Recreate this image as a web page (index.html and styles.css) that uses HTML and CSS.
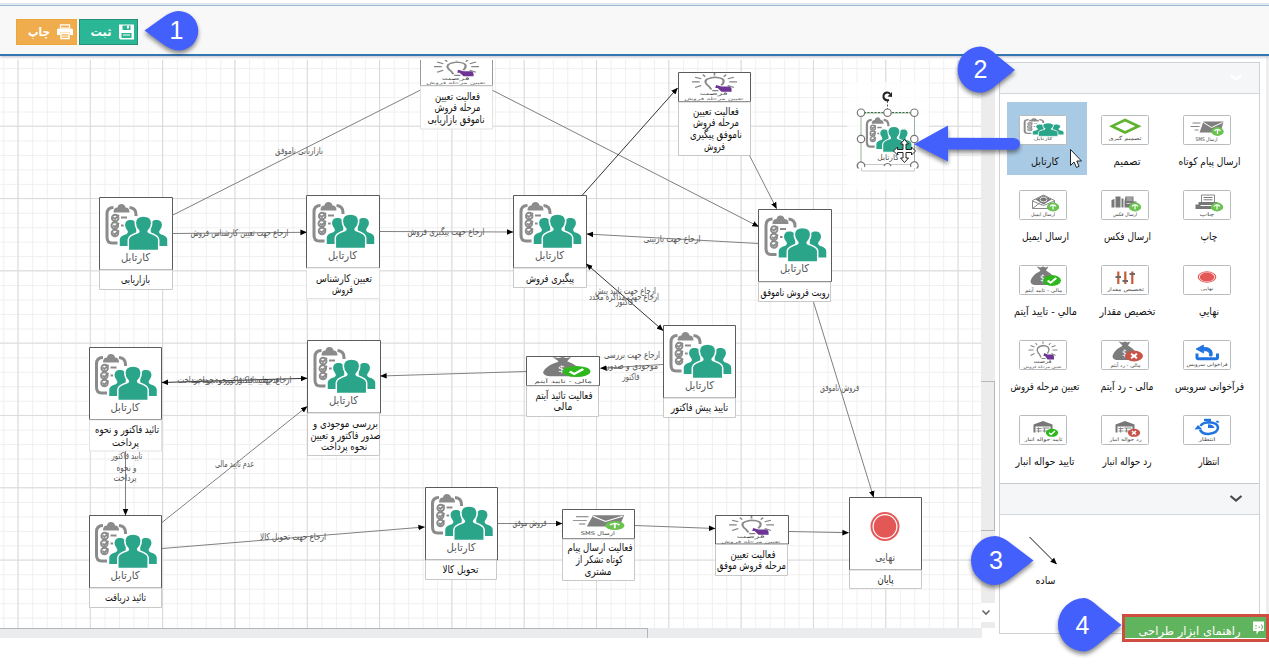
FILE: index.html
```html
<!DOCTYPE html>
<html lang="fa">
<head>
<meta charset="utf-8">
<title>طراحی فرآیند</title>
<link rel="stylesheet" href="styles.css">
</head>
<body>
<svg class="defs" width="0" height="0" aria-hidden="true">
  <defs>
    <pattern id="minor" x="17.8" y="53.7" width="14.46" height="14.46" patternUnits="userSpaceOnUse">
      <path d="M.5 0V14.5M0 .5H14.5" fill="none" stroke="#efefef"/>
    </pattern>
    <pattern id="major" x="17.4" y="53.3" width="72.32" height="72.32" patternUnits="userSpaceOnUse">
      <path d="M.5 0V72.4M0 .5H72.4" fill="none" stroke="#dadada"/>
    </pattern>
    <marker id="arrow" viewBox="0 0 8 8" refX="7" refY="4" markerWidth="7" markerHeight="7" markerUnits="userSpaceOnUse" orient="auto-start-reverse"><path d="M0 .8L7.5 4L0 7.2Z" fill="#000"/></marker>
    <symbol id="inbox" viewBox="0 0 73 73" preserveAspectRatio="none">
      <g fill="none" stroke="#8b8b8b" stroke-width="3">
        <path d="M18.500 46H13Q8 46 8 40V17Q8 10.500 14.500 10.500M30.500 10.500Q37 11 37 17.500V19"/>
        <g stroke-width="1.900"><circle cx="16.200" cy="21" r="3.300"/><circle cx="15.800" cy="28.500" r="3.300"/><circle cx="16" cy="36" r="3.300"/><path d="M14 20.500l2 1.500 4-4M14 28.500l2 1.500 4-4M14 36l2 1.500 4-4M22 20.500H28M22 28.500H25"/></g>
      </g>
      <path d="M14.500 15.500Q14.500 10.500 18.500 10.500Q19 7 22.400 7Q26 7 26.500 10.500Q30.500 10.500 30.500 15.500Z" fill="#8b8b8b"/>
      <g fill="#2ba58a" stroke="#fff" stroke-width="1.500">
        <path id="side" d="M20 49.700V42.500Q20 38.500 27 36.500Q29 35.500 27.500 33.500Q25 31 25.300 27.500Q26 22.300 31.500 22Q38 22.500 38 29V49.700Z"/>
        <use href="#side" transform="translate(89 0) scale(-1 1)"/>
        <path d="M29.300 53.500V42.500Q29.500 38.500 39 35.500Q40.500 34.500 39.500 33.500Q36.300 30.500 36.300 26Q36.500 19 44.500 19Q52.500 19 52.700 26Q52.700 30.500 49.500 33.500Q48.500 34.500 50 35.500Q59.500 38.500 59.700 42.500V53.500Z"/>
      </g>
      <text class="cap" x="36.500" y="63.500" textLength="29" lengthAdjust="spacingAndGlyphs">کارتابل</text>
    </symbol>
    <symbol id="final" viewBox="0 0 73 73" preserveAspectRatio="none">
      <circle cx="36.500" cy="29.500" r="13.500" fill="#fff" stroke="#e55b5b" stroke-width="2"/><circle cx="36.500" cy="29.500" r="11.300" fill="#e45757"/>
      <text class="cap" x="36.500" y="63.500" textLength="20" lengthAdjust="spacingAndGlyphs">نهایی</text>
    </symbol>
    <symbol id="sms" viewBox="0 0 47 28.500" preserveAspectRatio="none">
      <path d="M20 6H40L37 17H16Z" fill="#7f7f7f"/><path d="M20 7l8 5 11-5" fill="none" stroke="#fff" stroke-width="1"/>
      <path d="M9 7.500H17M7 11H16M11 14.500H15" stroke="#777" stroke-width=".9"/>
      <use href="#up" x="34" y="16"/>
      <text class="tiny" x="23" y="25.500" textLength="22" lengthAdjust="spacingAndGlyphs">ارسال SMS</text>
    </symbol>
    <g id="up"><ellipse rx="6.200" ry="4.400" fill="#6bc34f"/><path d="M0 2.500V-2M-3 -.500Q-2 -2 0-2.200Q2-2 3-.500" fill="none" stroke="#fff" stroke-width="1.200"/></g>
    <g id="ok"><ellipse rx="6.200" ry="4" fill="#2fb81d"/><path d="M-3 0L-1 1.700L3-1.800" fill="none" stroke="#fff" stroke-width="1.400"/></g>
    <g id="no"><ellipse rx="6.200" ry="4" fill="#c85548"/><path d="M-2-1.700L2 1.700M2-1.700L-2 1.700" fill="none" stroke="#fff" stroke-width="1.400"/></g>
    <symbol id="bulb" viewBox="0 0 47 28.500" preserveAspectRatio="none">
      <path d="M21.500 17Q20.500 14 18.500 12Q15.500 6.500 23.500 5Q31 5.500 29 11Q28.500 12 27.800 13" fill="none" stroke="#8a8a8a" stroke-width="1.400"/>
      <path d="M22 18H26M23.500 1V3.300M16 2.500l1.500 2M31 2.500l-1.500 2M11 5l4 1.600M36 5l-4 1.600M9 9.500H14M38 9.500H33M11 15l4-2M36 15l-4-2" fill="none" stroke="#858585" stroke-width="1.100"/>
      <path d="M24.500 12.500l3.500 1.500h5q1.500.500 1.500 2.500v2.500h-6.500l-2.500-3.500h-1.500z" fill="#6d3495"/>
      <text class="tiny" x="23" y="22.500" textLength="18" lengthAdjust="spacingAndGlyphs">فرصت</text>
      <text class="micro" x="23" y="27" textLength="38" lengthAdjust="spacingAndGlyphs">تعیین مرحله فروش</text>
    </symbol>
    <g id="bag"><path d="M17 1L21 2L23.500 1L26 2L29 1L26.500 5L28 6Q35 10 34.500 16Q34 19.500 30 19.500H15Q11 19 11 15.500Q13 9 20 6L21 5Z" fill="#7c7c7c"/><text class="dollar" x="23" y="15">$</text></g>
    <symbol id="money-ok" viewBox="0 0 47 28.500" preserveAspectRatio="none">
      <use href="#bag"/><use href="#ok" transform="translate(32.500 15) scale(1.450 1.350)"/>
      <text class="tiny" x="24" y="26" textLength="37" lengthAdjust="spacingAndGlyphs">مالی - تایید آیتم</text>
    </symbol>
    <symbol id="money-no" viewBox="0 0 47 28.500" preserveAspectRatio="none">
      <use href="#bag"/><use href="#no" transform="translate(32.500 15.500) scale(1.450 1.350)"/>
      <text class="tiny" x="24" y="26" textLength="30" lengthAdjust="spacingAndGlyphs">مالی - رد آیتم</text>
    </symbol>
    <symbol id="diamond" viewBox="0 0 47 28.500">
      <path d="M23.500 4.500L37 10.700L23.500 17L10.500 10.700Z" fill="none" stroke="#61b32f" stroke-width="2.600"/>
      <text class="tiny" x="23.500" y="24.500" textLength="33" lengthAdjust="spacingAndGlyphs">تصمیم گیری</text>
    </symbol>
    <symbol id="printer" viewBox="0 0 47 28.500">
      <path d="M18 4.500H31V12H18Z" fill="#fff" stroke="#888"/><path d="M20 7H29M20 9.300H29" stroke="#777"/><path d="M15 11.500H34V14H36V18.500H12V14H15Z" fill="#777"/><path d="M17 15H30" stroke="#fff"/><use href="#up" x="33.500" y="16.500"/>
      <text class="tiny" x="23.500" y="25.500" textLength="15" lengthAdjust="spacingAndGlyphs">چاپ</text>
    </symbol>
    <symbol id="fax" viewBox="0 0 47 28.500">
      <path d="M10 9.500l3-1V17H10ZM14 6H19V17H14ZM20 8H22V17H20ZM24 6H32V11H35V17H23V11Z" fill="#777"/><path d="M25 7.500H31M25 9.500H31M25 13H29" stroke="#ccc"/><use href="#up" x="33.500" y="16.500"/>
      <text class="tiny" x="23.500" y="25.500" textLength="24" lengthAdjust="spacingAndGlyphs">ارسال فکس</text>
    </symbol>
    <symbol id="email" viewBox="0 0 47 28.500">
      <path d="M13 10L24 4.500L35 10V18H13Z" fill="#fff" stroke="#888"/><path d="M16 9L24 5L32 9L24 14Z" fill="#777"/><ellipse cx="24" cy="9" rx="3.500" ry="2.300" fill="none" stroke="#ddd"/><path d="M13 18L21 12M13 10.500L24 15L35 10.500" fill="none" stroke="#888"/><use href="#up" x="33.500" y="16.500"/>
      <text class="tiny" x="23.500" y="25.500" textLength="24" lengthAdjust="spacingAndGlyphs">ارسال ایمیل</text>
    </symbol>
    <symbol id="sliders" viewBox="0 0 47 28.500">
      <path d="M16.800 6V18.500M23.800 6V18.500M30.800 6V18.500" stroke="#c65a37" stroke-width="2.200"/><path d="M14 11.500H19.500M21 15.500H26.500M28 8.500H33.500" stroke="#6a6a6a" stroke-width="2"/>
      <text class="tiny" x="24" y="25.500" textLength="37" lengthAdjust="spacingAndGlyphs">تخصیص مقدار</text>
    </symbol>
    <symbol id="service" viewBox="0 0 47 28.500">
      <path d="M13.500 13V17Q13.500 18.300 15 18.300H32.500Q34 18.300 34 17V13" fill="none" stroke="#1f74e0" stroke-width="3"/><path d="M20 4.500L12.500 8.500L20 12.500V10.200Q27 10 26 15.500H28.500Q30.500 7 20 6.800Z" fill="#1f74e0" stroke="#1f74e0" stroke-width=".8"/>
      <text class="tiny" x="23.500" y="25.500" textLength="41" lengthAdjust="spacingAndGlyphs">فراخوانی سرویس</text>
    </symbol>
    <symbol id="timer" viewBox="0 0 47 28.500">
      <path d="M16.500 14Q18 18.500 25 18.500Q34.500 17.500 34.500 12Q34 7.500 26 6.800Q19 7 17 10.500" fill="none" stroke="#1f74e0" stroke-width="2.500"/><path d="M11 14L14.500 9.500L18.500 13.500ZM20.500 3.300H27.500V5.500H20.500ZM32 6l2-1 2 1.500-2 1Z" fill="#1f74e0"/><path d="M24.500 12.500V8.800Q30 9 31 12.500Z" fill="#1f74e0"/>
      <text class="tiny" x="23.500" y="25.500" textLength="17" lengthAdjust="spacingAndGlyphs">انتظار</text>
    </symbol>
    <g id="depot"><path d="M14 9L23.500 5.500L33 9V17H31V11H16V17H14Z" fill="#777"/><path d="M17 13H22M17 15.500H22M23 12.500H30M23 15.500H29M19 12V17M25 12V17" stroke="#888" stroke-width="1.200"/></g>
    <symbol id="depot-ok" viewBox="0 0 47 28.500"><use href="#depot"/><use href="#ok" x="32.500" y="17.300"/><text class="tiny" x="24" y="25.500" textLength="38" lengthAdjust="spacingAndGlyphs">تایید حواله انبار</text></symbol>
    <symbol id="depot-no" viewBox="0 0 47 28.500"><use href="#depot"/><use href="#no" x="32.500" y="17.300"/><text class="tiny" x="24" y="25.500" textLength="32" lengthAdjust="spacingAndGlyphs">رد حواله انبار</text></symbol>
  </defs>
</svg>

<header class="toolbar">
  <button class="btn print">
    <svg width="22" height="16" viewBox="0 0 22 16"><text x="11" y="12" textLength="22" lengthAdjust="spacingAndGlyphs">چاپ</text></svg>
    <svg width="16" height="16" viewBox="0 0 16 16"><path d="M3.500.800H12.500V4H3.500Z" fill="none" stroke="#fff" stroke-width="1.200"/><path d="M0 6Q0 4.500 1.500 4.500H14.500Q16 4.500 16 6V11H13V8.500H3V11H0Z" fill="#fff"/><path d="M4 9.500H12V14.500H4Z" fill="none" stroke="#fff" stroke-width="1.500"/><path d="M5 12H11" stroke="#fff"/></svg>
  </button>
  <button class="btn save">
    <svg width="22" height="16" viewBox="0 0 22 16"><text x="11" y="12" textLength="21" lengthAdjust="spacingAndGlyphs">ثبت</text></svg>
    <svg width="15" height="16" viewBox="0 0 15 16"><path d="M0 .500H15V15.500H1.500L0 14Z" fill="#fff"/><path d="M3.500 1.500H11.500V6H3.500ZM2.500 9H12.500V14H2.500Z" fill="#2bb795"/><path d="M8 1.500H10V4.500H8ZM4 10.500H11V11.500H4Z" fill="#fff"/></svg>
  </button>
</header>

<main class="main">
  <section class="workspace">
    <div class="upper">
      <svg class="canvas" width="981" height="572" viewBox="0 56 981 572">
        <rect y="60" width="981" height="568" fill="url(#minor)"/>
        <rect y="60" width="981" height="568" fill="url(#major)"/>
        <rect x="847" y="82" width="82" height="108" fill="#fff" opacity=".75"/>
        <g class="node">
          <path class="frame" d="M99.500 197.500H172.500V270H99.500Z"/><path class="box" d="M99.500 270H172.500V289.500H99.500Z"/><use href="#inbox" x="99" y="197" width="73" height="73"/>
          <path class="frame" d="M306.500 195.500H379.500V268H306.500Z"/><path class="box open" d="M306.500 268H379.500V298.500H306.500Z"/><use href="#inbox" x="306" y="195" width="73" height="73"/>
          <path class="frame" d="M513.500 195.500H586.500V268H513.500Z"/><path class="box" d="M513.500 268H586.500V287.500H513.500Z"/><use href="#inbox" x="513" y="195" width="73" height="73"/>
          <path class="frame" d="M758.500 209.500H831.500V281.500H758.500Z"/><path class="box" d="M758.500 282H830.500V301.500H758.500Z"/><use href="#inbox" x="758" y="208.500" width="73" height="73"/>
          <path class="frame soft" d="M420.500 60V85.500H492.500V60"/><path class="box open" d="M420.500 86H492.500V129H420.500Z"/>
          <svg x="420" y="60" width="73" height="26" viewBox="0 3 73 26"><use href="#bulb" width="73" height="29"/></svg>
          <path class="frame" d="M678.500 72.500H750.500V101.500H678.500Z"/><path class="box" d="M678.500 102H750.500V155.500H678.500Z"/><use href="#bulb" x="678" y="72" width="73" height="29.500"/>
          <path class="frame" d="M663.500 325.500H735.500V398H663.500Z"/><path class="box" d="M663.500 398H735.500V417.500H663.500Z"/><use href="#inbox" x="663" y="325" width="73" height="73"/>
          <path class="frame" d="M526.500 356.500H599.500V385.500H526.500Z"/><path class="box" d="M526.500 386H598.500V416.500H526.500Z"/><use href="#money-ok" x="526" y="356" width="73" height="29.500"/>
          <path class="frame" d="M89.500 347.500H161.500V419.500H89.500Z"/><path class="box open" d="M89.500 420H161.500V451H89.500Z"/><use href="#inbox" x="88.500" y="347" width="73" height="73"/>
          <path class="frame" d="M307.500 340.500H380.500V413H307.500Z"/><path class="box" d="M307.500 413H379.500V455.500H307.500Z"/><use href="#inbox" x="307" y="340" width="73" height="73"/>
          <path class="frame" d="M89.500 515.500H161.500V588H89.500Z"/><path class="box" d="M89.500 588H161.500V607.500H89.500Z"/><use href="#inbox" x="88.500" y="515" width="73" height="73"/>
          <path class="frame" d="M425.500 487.500H497.500V560H425.500Z"/><path class="box" d="M425.500 560H496.500V579.500H425.500Z"/><use href="#inbox" x="424.500" y="487" width="73" height="73"/>
          <path class="frame" d="M562.500 509.500H634.500V538.500H562.500Z"/><path class="box" d="M562.500 539H634.500V580.500H562.500Z"/><use href="#sms" x="562" y="509" width="73" height="29.500"/>
          <path class="frame" d="M715.500 515.500H788.500V544H715.500Z"/><path class="box" d="M715.500 544.500H787.500V575.500H715.500Z"/><use href="#bulb" x="715" y="515" width="73" height="29.500"/>
          <path class="frame" d="M849.500 497.500H921.500V570H849.500Z"/><path class="box" d="M849.500 570H921.500V588.500H849.500Z"/><use href="#final" x="848.500" y="497" width="73" height="73"/>
        </g>
        <g class="edges">
          <path d="M172 215.500L420 90.300"/>
          <path d="M492.500 90.300L758.500 226.500" marker-end="url(#arrow)"/>
          <path d="M172.500 233.500L306.500 232.300" marker-end="url(#arrow)"/>
          <path d="M379.500 231.500L513 232" marker-end="url(#arrow)"/>
          <path class="dark" d="M582 195.500L677.500 88" marker-end="url(#arrow)"/>
          <path d="M749.500 155.500L776.500 208.500" marker-end="url(#arrow)"/>
          <path d="M758.500 243.500L587 234" marker-end="url(#arrow)"/>
          <path class="dark" d="M586.500 264L663 330.500" marker-start="url(#arrow)" marker-end="url(#arrow)"/>
          <path d="M663 364.500L600.500 368.300" marker-end="url(#arrow)"/>
          <path d="M526 371.500L380.500 376" marker-end="url(#arrow)"/>
          <path class="dark" d="M162 382.500L307 378.300" marker-start="url(#arrow)" marker-end="url(#arrow)"/>
          <path d="M125.500 451V515" marker-end="url(#arrow)"/>
          <path d="M162 522.500L307 406.500" marker-end="url(#arrow)"/>
          <path d="M162 548.500L424.500 527" marker-end="url(#arrow)"/>
          <path d="M498 523.500H562" marker-end="url(#arrow)"/>
          <path d="M635 525.500L715 528.500" marker-end="url(#arrow)"/>
          <path d="M788.500 531.500L848.500 532.700" marker-end="url(#arrow)"/>
          <path d="M813.500 302L873.500 497" marker-end="url(#arrow)"/>
        </g>
        <g class="edge-text">
          <text x="299" y="154" textLength="48" lengthAdjust="spacingAndGlyphs">بازاریابی ناموفق</text>
          <text x="239.500" y="236" textLength="98" lengthAdjust="spacingAndGlyphs">ارجاع جهت تعیین کارشناس فروش</text>
          <text x="446" y="235" textLength="77" lengthAdjust="spacingAndGlyphs">ارجاع جهت پیگیری فروش</text>
          <text x="672" y="242" textLength="57" lengthAdjust="spacingAndGlyphs">ارجاع جهت بازبینی</text>
          <text x="625.500" y="293.500" textLength="61" lengthAdjust="spacingAndGlyphs">ارجاع جهت تایید پیش</text>
          <text x="624" y="299.500" textLength="70" lengthAdjust="spacingAndGlyphs">ارجاع جهت مذاکره مجدد</text>
          <text x="624.500" y="304.500" textLength="17" lengthAdjust="spacingAndGlyphs">فاکتور</text>
          <text x="632" y="358" textLength="56" lengthAdjust="spacingAndGlyphs">ارجاع جهت بررسی</text>
          <text x="632" y="369" textLength="52" lengthAdjust="spacingAndGlyphs">موجودی و صدور</text>
          <text x="631" y="380" textLength="17" lengthAdjust="spacingAndGlyphs">فاکتور</text>
          <text x="234.500" y="382.500" textLength="114" lengthAdjust="spacingAndGlyphs">ارجاع جهت تایید فاکتور و نحوه پرداخت</text>
          <text x="236" y="382.500" textLength="88" lengthAdjust="spacingAndGlyphs">عدم تایید فاکتور و نحوه پرداخت</text>
          <text x="127" y="458.500" textLength="31" lengthAdjust="spacingAndGlyphs">تایید فاکتور</text>
          <text x="126.500" y="470.500" textLength="20" lengthAdjust="spacingAndGlyphs">و نحوه</text>
          <text x="125" y="481" textLength="23" lengthAdjust="spacingAndGlyphs">پرداخت</text>
          <text x="234.500" y="467" textLength="39" lengthAdjust="spacingAndGlyphs">عدم تایید مالی</text>
          <text x="293" y="540" textLength="66" lengthAdjust="spacingAndGlyphs">ارجاع جهت تحویل کالا</text>
          <text x="529.500" y="526" textLength="34" lengthAdjust="spacingAndGlyphs">فروش موفق</text>
          <text x="839.500" y="391" textLength="39" lengthAdjust="spacingAndGlyphs">فروش ناموفق</text>
        </g>
        <g class="node-text">
          <text x="135.500" y="283" textLength="29" lengthAdjust="spacingAndGlyphs">بازاریابی</text>
          <text x="344" y="282" textLength="56" lengthAdjust="spacingAndGlyphs">تعیین کارشناس</text>
          <text x="342.500" y="293" textLength="21" lengthAdjust="spacingAndGlyphs">فروش</text>
          <text x="550" y="282" textLength="48" lengthAdjust="spacingAndGlyphs">پیگیری فروش</text>
          <text x="795" y="296" textLength="69" lengthAdjust="spacingAndGlyphs">رویت فروش ناموفق</text>
          <text x="457.500" y="99.500" textLength="45" lengthAdjust="spacingAndGlyphs">فعالیت تعیین</text>
          <text x="457.500" y="111" textLength="46" lengthAdjust="spacingAndGlyphs">مرحله فروش</text>
          <text x="456" y="123" textLength="57" lengthAdjust="spacingAndGlyphs">ناموفق بازاریابی</text>
          <text x="716" y="114.500" textLength="46" lengthAdjust="spacingAndGlyphs">فعالیت تعیین</text>
          <text x="716" y="126" textLength="46" lengthAdjust="spacingAndGlyphs">مرحله فروش</text>
          <text x="716" y="138" textLength="52" lengthAdjust="spacingAndGlyphs">ناموفق پیگیری</text>
          <text x="714.500" y="149.500" textLength="21" lengthAdjust="spacingAndGlyphs">فروش</text>
          <text x="699.500" y="411" textLength="57" lengthAdjust="spacingAndGlyphs">تایید پیش فاکتور</text>
          <text x="564" y="399" textLength="57" lengthAdjust="spacingAndGlyphs">فعالیت تائید آیتم</text>
          <text x="563" y="410" textLength="19" lengthAdjust="spacingAndGlyphs">مالی</text>
          <text x="127" y="433" textLength="64" lengthAdjust="spacingAndGlyphs">تائید فاکتور و نحوه</text>
          <text x="125.500" y="445.500" textLength="27" lengthAdjust="spacingAndGlyphs">پرداخت</text>
          <text x="345.500" y="426.500" textLength="65" lengthAdjust="spacingAndGlyphs">بررسی موجودی و</text>
          <text x="345.500" y="438.500" textLength="70" lengthAdjust="spacingAndGlyphs">صدور فاکتور و تعیین</text>
          <text x="344" y="450" textLength="46" lengthAdjust="spacingAndGlyphs">نحوه پرداخت</text>
          <text x="125.500" y="601" textLength="41" lengthAdjust="spacingAndGlyphs">تائید دریافت</text>
          <text x="460.500" y="573" textLength="36" lengthAdjust="spacingAndGlyphs">تحویل کالا</text>
          <text x="600" y="551" textLength="65" lengthAdjust="spacingAndGlyphs">فعالیت ارسال پیام</text>
          <text x="599.500" y="563" textLength="47" lengthAdjust="spacingAndGlyphs">کوتاه تشکر از</text>
          <text x="598" y="575" textLength="27" lengthAdjust="spacingAndGlyphs">مشتری</text>
          <text x="753" y="558" textLength="45" lengthAdjust="spacingAndGlyphs">فعالیت تعیین</text>
          <text x="751.500" y="569" textLength="69" lengthAdjust="spacingAndGlyphs">مرحله فروش موفق</text>
          <text x="885.500" y="583" textLength="16" lengthAdjust="spacingAndGlyphs">پایان</text>
        </g>
        <g class="dragged">
          <rect x="861" y="113" width="53.500" height="53" fill="#fff" stroke="#8fb59a"/>
          <path class="box" d="M861.500 164.500H914.500V171H861.500Z"/>
          <use href="#inbox" x="861" y="112" width="54" height="55"/>
          <path d="M860.500 112.500H914.500M887.500 101V112" fill="none" stroke="#3f6b48" stroke-dasharray="2 1.500"/>
          <g class="handles"><circle cx="861" cy="112.700" r="3.700"/><circle cx="887.500" cy="112.700" r="3.700"/><circle cx="914.300" cy="112.700" r="3.700"/><circle cx="861" cy="139" r="3.700"/><circle cx="914.300" cy="139" r="3.700"/><path d="M858.500 168.500A3.700 3.700 0 1 1 864.500 167M884 166A3.700 3.700 0 0 1 891 166M911 167A3.700 3.700 0 1 1 916.500 168.500"/></g>
          <path d="M889 100Q885 101 883.500 97.500Q883 93 887 92.500Q889 92.300 890 94" fill="none" stroke="#222" stroke-width="2"/><path d="M887.500 96.500L892 92V97Z" fill="#222"/>
        </g>
      </svg>
      <div class="vbar">
        <div class="thumb"></div>
        <svg class="down" width="14" height="19" viewBox="0 0 14 19"><path d="M1.500 7.500l3.500 3.500 3.500-3.500" fill="none" stroke="#666" stroke-width="1.600"/></svg>
      </div>
    </div>
    <div class="hbar"><div class="thumb"></div></div>
  </section>

  <aside class="palette">
    <div class="head"><svg width="14" height="8" viewBox="0 0 14 8"><path d="M1.500 1L7 5.500L12.500 1" fill="none" stroke="#fff" stroke-width="2.500"/></svg></div>
    <div class="tiles">
      <svg class="tile" viewBox="0 0 80 73"><rect class="card" x="12.500" y="13.500" width="47" height="29" rx="1"/><use href="#sms" x="12.500" y="13.500" width="47" height="28.500"/><text x="38.500" y="62.500" textLength="62" lengthAdjust="spacingAndGlyphs">ارسال پیام کوتاه</text></svg>
      <svg class="tile" viewBox="0 0 80 73"><rect class="card" x="12.500" y="13.500" width="47" height="29" rx="1"/><use href="#diamond" x="12.500" y="13.500" width="47" height="28.500"/><text x="38" y="62.500" textLength="27" lengthAdjust="spacingAndGlyphs">تصمیم</text></svg>
      <svg class="tile selected" viewBox="0 0 80 73"><rect class="card" x="12.500" y="13.500" width="47" height="29" rx="1"/><use href="#inbox" x="12.500" y="13.500" width="47" height="28.500"/><text x="38" y="62.500" textLength="28" lengthAdjust="spacingAndGlyphs">کارتابل</text></svg>

      <svg class="tile" viewBox="0 0 80 73"><rect class="card" x="12.500" y="13.500" width="47" height="29" rx="1"/><use href="#printer" x="12.500" y="13.500" width="47" height="28.500"/><text x="38" y="62.500" textLength="17" lengthAdjust="spacingAndGlyphs">چاپ</text></svg>
      <svg class="tile" viewBox="0 0 80 73"><rect class="card" x="12.500" y="13.500" width="47" height="29" rx="1"/><use href="#fax" x="12.500" y="13.500" width="47" height="28.500"/><text x="38.500" y="62.500" textLength="47" lengthAdjust="spacingAndGlyphs">ارسال فکس</text></svg>
      <svg class="tile" viewBox="0 0 80 73"><rect class="card" x="12.500" y="13.500" width="47" height="29" rx="1"/><use href="#email" x="12.500" y="13.500" width="47" height="28.500"/><text x="38.500" y="62.500" textLength="47" lengthAdjust="spacingAndGlyphs">ارسال ایمیل</text></svg>

      <svg class="tile" viewBox="0 0 80 73"><rect class="card" x="12.500" y="13.500" width="47" height="29" rx="1"/><use href="#final" x="12.500" y="13.500" width="47" height="28.500"/><text x="38" y="62.500" textLength="20" lengthAdjust="spacingAndGlyphs">نهايي</text></svg>
      <svg class="tile" viewBox="0 0 80 73"><rect class="card" x="12.500" y="13.500" width="47" height="29" rx="1"/><use href="#sliders" x="12.500" y="13.500" width="47" height="28.500"/><text x="38.500" y="62.500" textLength="56" lengthAdjust="spacingAndGlyphs">تخصیص مقدار</text></svg>
      <svg class="tile" viewBox="0 0 80 73"><rect class="card" x="12.500" y="13.500" width="47" height="29" rx="1"/><use href="#money-ok" x="12.500" y="13.500" width="47" height="28.500"/><text x="38.500" y="62.500" textLength="63" lengthAdjust="spacingAndGlyphs">مالي - تاييد آيتم</text></svg>

      <svg class="tile" viewBox="0 0 80 73"><rect class="card" x="12.500" y="13.500" width="47" height="29" rx="1"/><use href="#service" x="12.500" y="13.500" width="47" height="28.500"/><text x="38.500" y="62.500" textLength="69" lengthAdjust="spacingAndGlyphs">فرآخوانی سرویس</text></svg>
      <svg class="tile" viewBox="0 0 80 73"><rect class="card" x="12.500" y="13.500" width="47" height="29" rx="1"/><use href="#money-no" x="12.500" y="13.500" width="47" height="28.500"/><text x="38" y="62.500" textLength="53" lengthAdjust="spacingAndGlyphs">مالی - رد آیتم</text></svg>
      <svg class="tile" viewBox="0 0 80 73"><rect class="card" x="12.500" y="13.500" width="47" height="29" rx="1"/><use href="#bulb" x="12.500" y="13.500" width="47" height="28.500"/><text x="38" y="62.500" textLength="69" lengthAdjust="spacingAndGlyphs">تعیین مرحله فروش</text></svg>

      <svg class="tile" viewBox="0 0 80 73"><rect class="card" x="12.500" y="13.500" width="47" height="29" rx="1"/><use href="#timer" x="12.500" y="13.500" width="47" height="28.500"/><text x="38" y="62.500" textLength="21" lengthAdjust="spacingAndGlyphs">انتظار</text></svg>
      <svg class="tile" viewBox="0 0 80 73"><rect class="card" x="12.500" y="13.500" width="47" height="29" rx="1"/><use href="#depot-no" x="12.500" y="13.500" width="47" height="28.500"/><text x="38" y="62.500" textLength="49" lengthAdjust="spacingAndGlyphs">رد حواله انبار</text></svg>
      <svg class="tile" viewBox="0 0 80 73"><rect class="card" x="12.500" y="13.500" width="47" height="29" rx="1"/><use href="#depot-ok" x="12.500" y="13.500" width="47" height="28.500"/><text x="38" y="62.500" textLength="59" lengthAdjust="spacingAndGlyphs">تایید حواله انبار</text></svg>
    </div>
    <div class="head second"><svg width="14" height="8" viewBox="0 0 14 8"><path d="M1.500 1L7 5.500L12.500 1" fill="none" stroke="#4a4a4a" stroke-width="2.200"/></svg></div>
    <div class="links">
      <svg class="tile" viewBox="0 0 80 73"><path d="M21.500 15L48.500 42" fill="none" stroke="#111" marker-end="url(#arrow)"/><text x="37.500" y="62" textLength="20" lengthAdjust="spacingAndGlyphs">ساده</text></svg>
    </div>
  </aside>
  <div class="edge"></div>
</main>

<div class="help">
  <svg width="126" height="22" viewBox="0 0 126 22"><text x="51.500" y="17.500" textLength="102" lengthAdjust="spacingAndGlyphs">راهنمای ابزار طراحی</text><path d="M115 4.500H126V14H121L118.500 17.500V14H115Z" fill="#fff"/><path d="M118 8V9.500M118 11V12M120.500 10.200H122M123.500 7.500Q125.500 10 123.500 12.500" fill="none" stroke="#5fa95f"/></svg>
</div>

<svg class="overlay" width="1269" height="664" viewBox="0 0 1269 664">
  <g class="marks">
    <path d="M144.500 30.500L163.500 17Q171 11.300 178.500 11A19.750 19.750 0 0 1 178.500 50.500Q171 50 163.500 44.500Z"/>
    <path d="M1015 70L997 55.500Q989 46.800 980.700 46.500A23.100 23.100 0 0 0 980.700 92.700Q989 92 997 84.500Z"/>
    <path d="M1033.500 560.500L1013 545Q1003 536.500 995.500 536A24.500 24.500 0 0 0 995.500 585Q1003 584.500 1013 576.500Z"/>
    <path d="M1121.500 625L1099 607Q1090 598.500 1084.700 598A26.750 26.750 0 0 0 1084.700 651.500Q1092 650 1099 643.500Z"/>
    <path d="M914 144.300L948 125.500V137.700L1014 138Q1020 139 1020 144Q1020 149 1014 149.700L948 149.500V161.500Z"/>
  </g>
  <g class="digits"><text x="176.500" y="38.500">1</text><text x="980.500" y="78">2</text><text x="996" y="568.500">3</text><text x="1082.500" y="634">4</text></g>
  <path d="M904.500 139.500L908.500 144H906V149.500H911.500V147L915.500 151L911.500 155V152.500H906V158H908.500L904.500 162.500L900.500 158H903V152.500H897.500V155L893.500 151L897.500 147V149.500H903V144H900.500Z" fill="#fff" stroke="#222"/>
  <path d="M1070.500 149.500V165.500L1074 162L1076.500 167.500L1079 166.300L1076.800 161H1081.500Z" fill="#fff" stroke="#222"/>
</svg>
</body>
</html>
```
FILE: styles.css
```css
* { box-sizing: border-box; }
body { margin: 0; width: 1269px; height: 664px; overflow: hidden; background: #fff; font-family: "DejaVu Sans", Tahoma, sans-serif; position: relative; }
svg { display: block; }
.defs { position: absolute; }
text { direction: rtl; text-anchor: middle; font-family: "DejaVu Sans", sans-serif; }

.toolbar { height: 56px; padding: 13px 0 0 16px; display: flex; gap: 2px; align-items: flex-start; background: #f8f8f8; border-bottom: 2px solid #3576b0; border-top: 6px solid #a9c2dc; border-image: linear-gradient(#fff 0 3px, #dfe8f1 3px 5px, #9fbad6 5px 6px, #3576b0 6px) 6 0 2 0; box-shadow: 0 1px 3px #bbc; position: relative; }
.btn { height: 26px; display: flex; align-items: center; justify-content: flex-end; gap: 7px; padding: 0 3px 0 0; margin: 0; }
.btn text { font-size: 12px; font-weight: bold; fill: #fff; }
.btn svg { overflow: visible; }
.print { width: 61px; background: #f0ad4e; border: 1px solid #eda63c; }
.save { width: 59px; background: #2bb795; border: 1px solid #248f77; }

.main { display: flex; height: 582px; }
.workspace { width: 995px; }
.upper { display: flex; height: 572px; }
.vbar { width: 14px; display: flex; flex-direction: column; justify-content: space-between; padding-top: 4px; background: #ececed; }
.vbar .thumb { margin-top: 321px; height: 150px; border: 1px solid #b5b7b9; border-left: 0; }
.vbar .down { background: #fff; margin-bottom: 6px; }
.hbar { width: 982px; height: 10px; background: #ebecee; }
.hbar .thumb { width: 648px; height: 10px; border-top: 1px solid #b3b6b9; border-right: 1px solid #b3b6b9; }

.edges path { stroke: #808080; stroke-width: 1; fill: none; }
.edges .dark { stroke: #333; }
.frame { fill: #fff; stroke: #5c5c5c; }
.frame.soft { stroke: #999; }
.box { fill: #fff; stroke: #c9c9c9; }
.box.open { stroke: #e2e2e2; }
.node-text text { font-size: 10.5px; fill: #111; }
.edge-text text { font-size: 9.5px; fill: #555; }
.cap { font-size: 11px; fill: #555; }
.tiny { font-size: 5px; fill: #444; }
.micro { font-size: 4px; fill: #666; }
.dollar { font-size: 8px; fill: #fff; }
.handles { fill: #fff; stroke: #777; stroke-width: 1.2; }

.palette { width: 261px; height: 572px; margin: 6px 0 0 4px; border: 1px solid #cfd2d4; background: #fff; }
.head { height: 31px; background: #f5f6f7; border-bottom: 1px solid #d3d6d8; display: flex; justify-content: flex-end; align-items: center; padding-right: 16px; }
.head.second { border-top: 1px solid #c6cacd; height: 32px; }
.tiles { height: 389px; padding: 8px 0 0 7px; display: grid; grid-template-columns: repeat(3, 80px); grid-auto-rows: 73px; column-gap: 2px; row-gap: 2px; direction: rtl; justify-content: end; }
.tile { width: 80px; height: 73px; overflow: visible; }
.tile text { font-size: 10.5px; fill: #111; }
.tile.selected { background: #a9cae5; }
.card { fill: #fff; stroke: #b9bcbe; }
.links { padding: 7px 0 0 8px; }
.edge { width: 3px; height: 582px; margin-left: auto; background: #eee; }

.help { position: absolute; left: 1122px; top: 614px; width: 147px; height: 28px; border: 3px solid #cf4d42; background: #5fb45d; box-shadow: inset 0 -1px #fff; padding-left: 13px; }
.help text { font-size: 12px; fill: #fff; }
.overlay { position: absolute; left: 0; top: 0; pointer-events: none; }
.marks { fill: #4360fd; filter: drop-shadow(0 3px 2px rgba(0, 0, 0, .45)); }
.digits text { direction: ltr; font: 25px "Liberation Sans", Arial, sans-serif; fill: #fff; }
```
